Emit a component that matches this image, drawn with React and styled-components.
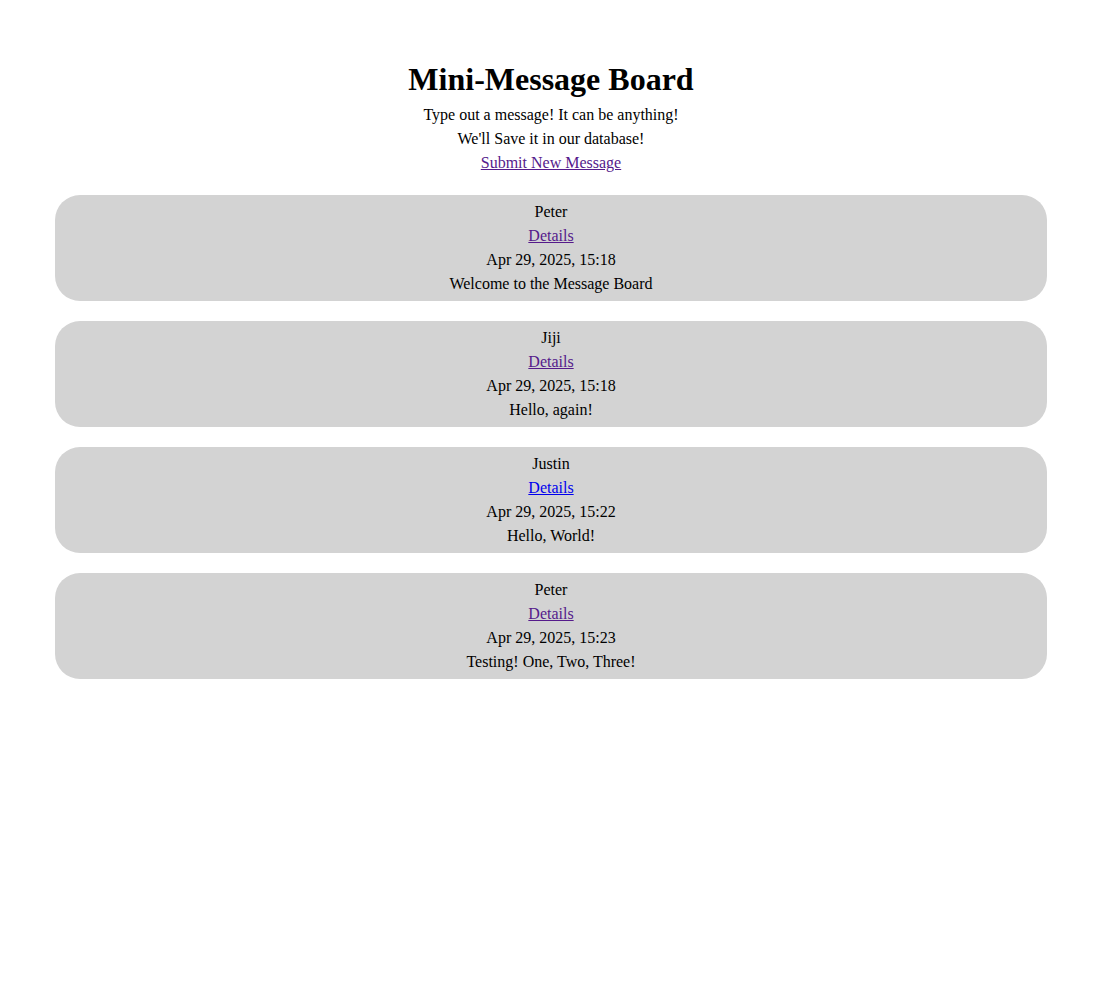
import styled, {createGlobalStyle} from 'styled-components'
import React from 'react'

const GlobalStyle = createGlobalStyle`
    body {
        margin: 0;
        font-family: "Liberation Serif", "Times New Roman", serif;
        font-size: 16px;
        color: #000;
        background: #fff;
    }
`

const PAGE = styled.div`
    display: flex;
    flex-direction: column;
    align-items: center;
    gap: 20px;
    padding-top: 61px;
`

const HEADER = styled.header`
    display: flex;
    flex-direction: column;
    align-items: center;
    text-align: center;
`

const TITLE = styled.h1`
    margin: 0 0 5px 0;
    font-size: 32px;
    font-weight: bold;
    line-height: normal;
`

const LINE = styled.div`
    line-height: 24px;
`

const LINK = styled.a`
    line-height: 24px;
    color: ${props => props.visited ? '#551a8b' : '#0000ee'};
    text-decoration: underline;
    cursor: pointer;
`

const CARD = styled.div`
    width: 90%;
    box-sizing: border-box;
    padding: 5px 0;
    background: #d3d3d3;
    border-radius: 25px;
    display: flex;
    flex-direction: column;
    align-items: center;
    text-align: center;
`

const messages = [
    {user: 'Peter', date: 'Apr 29, 2025, 15:18', text: 'Welcome to the Message Board', visited: true},
    {user: 'Jiji', date: 'Apr 29, 2025, 15:18', text: 'Hello, again!', visited: true},
    {user: 'Justin', date: 'Apr 29, 2025, 15:22', text: 'Hello, World!', visited: false},
    {user: 'Peter', date: 'Apr 29, 2025, 15:23', text: 'Testing! One, Two, Three!', visited: true},
]

function MessageCard({message}) {
    return (
        <CARD>
            <LINE>{message.user}</LINE>
            <LINK visited={message.visited}>Details</LINK>
            <LINE>{message.date}</LINE>
            <LINE>{message.text}</LINE>
        </CARD>
    )
}

export default function App() {
    return (
        <>
            <GlobalStyle />
            <PAGE>
                <HEADER>
                    <TITLE>Mini-Message Board</TITLE>
                    <LINE>Type out a message! It can be anything!</LINE>
                    <LINE>We'll Save it in our database!</LINE>
                    <LINK visited>Submit New Message</LINK>
                </HEADER>
                {messages.map((m, i) => <MessageCard key={i} message={m} />)}
            </PAGE>
        </>
    )
}
